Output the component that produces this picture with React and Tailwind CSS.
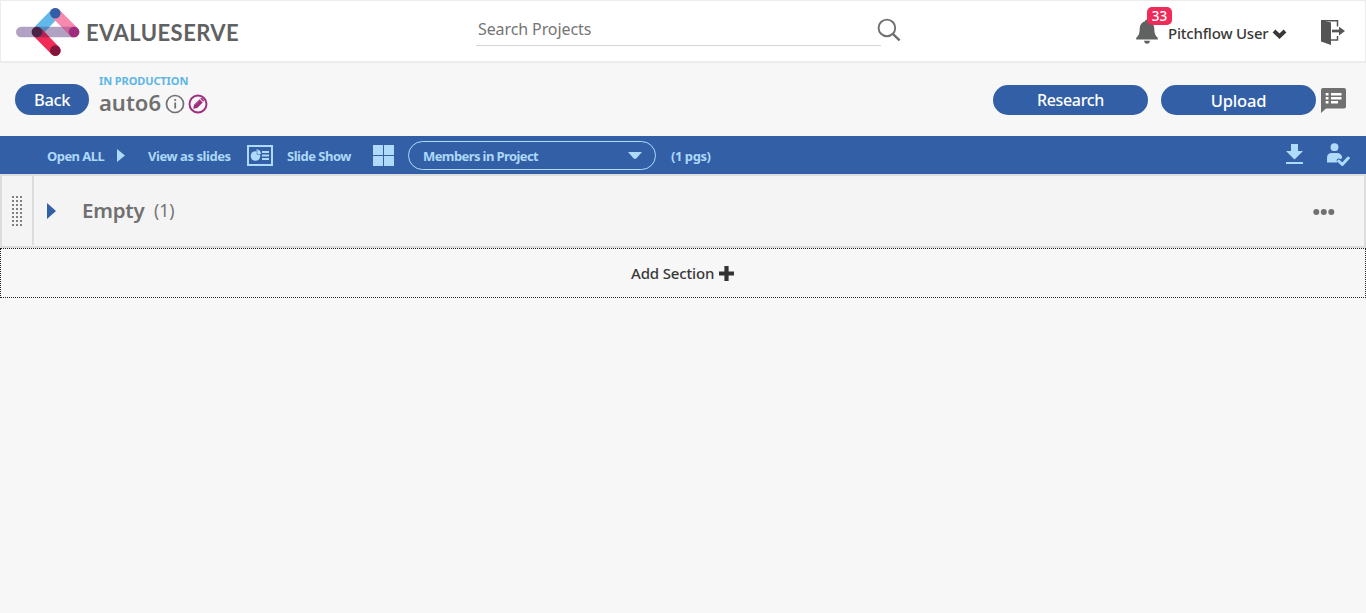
import React from "react";

const Logo = () => (
  <svg className="h-[50px] w-[66px] shrink-0" viewBox="15 7 66 50" fill="none" strokeWidth="10.6" strokeLinecap="round">
    <path d="M21.3 32H74" stroke="#afa2c2" />
    <path d="M55.3 13.3L37 32" stroke="#62b8e8" />
    <path d="M55.3 13.3L74 32" stroke="#f789ad" />
    <path d="M37 32L55.3 50.6" stroke="#f22a57" />
    <path d="M39 26.7H49.7L39.5 37.3H37Z" fill="#5588be" />
    <path d="M61.200 26.700H76L74 37.300H71.500Z" fill="#c8669e" />
    <path d="M35 32L40.5 37.3H49.500L42 29Z" fill="#b52352" />
    <circle cx="55.3" cy="13.3" r="5.3" fill="#315fa7" />
    <circle cx="74" cy="32" r="5.3" fill="#a02c7d" />
    <circle cx="37" cy="32" r="5.3" fill="#472346" />
    <circle cx="55.3" cy="50.6" r="5.3" fill="#85163b" />
  </svg>
);

const Header = () => (
  <header className="flex h-[63px] items-start border border-b-2 border-[#ececec] bg-white">
    <div className="ml-[14px] mt-[6px] flex w-[461px] items-center">
      <Logo />
      <span className="ml-[5px] mt-px whitespace-nowrap font-['Lato'] text-[22px] font-bold leading-[28px] tracking-[0.450px] text-[#606161]">EVALUESERVE</span>
    </div>
    <div className="flex h-[45px] w-[405px] items-center border-b border-[#d5d5d5] pl-[2px] pt-[11px]">
      <span className="whitespace-nowrap text-[16px] tracking-[-0.1px] text-[#757575]">Search Projects</span>
    </div>
    <svg className="-ml-[4px] mt-[17px] h-6 w-6 shrink-0" viewBox="0 0 24 24" fill="none" stroke="#707070">
      <circle cx="9.9" cy="9.9" r="8.3" strokeWidth="1.9" />
      <path d="M15.8 15.8L22.6 22.3" strokeWidth="2.5" />
    </svg>
    <div className="relative ml-[234px] mt-[17px] h-[28px] w-[24px] shrink-0">
      <svg className="h-[28px] w-[24px]" viewBox="0 0 24 28" fill="#606161">
        <path d="M12 1.5c1.1 0 1.9.7 1.9 1.8 3.5 1 5.4 3.6 5.4 7.3 0 5 1 7.2 3.5 9.2v1.8H1.2v-1.8c2.5-2 3.5-4.200 3.500-9.200 0-3.700 1.900-6.300 5.400-7.300 0-1.100.8-1.800 1.900-1.800z" />
        <path d="M9 22.800h6c-.3 1.900-1.400 2.900-3 2.900s-2.700-1-3-2.900z" />
      </svg>
      <span className="absolute -top-[11px] left-[12px] flex h-[18px] w-[25px] items-center justify-center rounded-[5px] bg-[#ef2b59] pt-px text-[13.500px] font-medium text-white">33</span>
    </div>
    <div className="ml-[9px] mt-[21px] flex h-[22px] w-[120px] items-center">
      <span className="w-[101px] whitespace-nowrap text-[15px] font-medium tracking-[-0.200px] text-[#383838]">Pitchflow User</span>
      <svg className="ml-[3px] mt-px h-[10px] w-[15px] shrink-0" viewBox="0 0 15 10">
        <path d="M2 2L7.500 7.200L13 2" fill="none" stroke="#383838" strokeWidth="4" />
      </svg>
    </div>
    <svg className="ml-[32px] mt-[17px] h-[28px] w-[26px] shrink-0" viewBox="0 0 26 28" fill="none" stroke="#555">
      <path d="M1 2L11 4.500V27L1 23.500Z" fill="#555" stroke="none" />
      <path d="M1 2.700H17.500V8.500M17.500 18V22H11" strokeWidth="1.500" />
      <path d="M12 13H21" strokeWidth="2.700" />
      <path d="M19 8.700L25 13L19 17.500Z" fill="#555" stroke="none" />
    </svg>
  </header>
);

const Title = () => (
  <div className="flex h-[73px] items-start pl-[15px]">
    <button className="mt-[21px] h-[31px] w-[74px] rounded-full bg-[#325fa6] pt-px text-[16.500px] font-medium leading-[30px] tracking-[-0.400px] text-white">Back</button>
    <div className="ml-[10px] mt-[11px] w-[894px]">
      <div className="h-[14px] whitespace-nowrap text-[11px] font-bold leading-[14px] tracking-[-0.100px] text-[#5db6e6]">IN PRODUCTION</div>
      <div className="flex h-[31px] items-center">
        <span className="-mt-[2px] w-[62px] whitespace-nowrap text-[22px] font-semibold tracking-[0px] text-[#707070]">auto6</span>
        <svg className="ml-[4px] h-5 w-5" viewBox="0 0 20 20" fill="none" stroke="#707070">
          <circle cx="10" cy="10" r="8.500" strokeWidth="1.700" />
          <path d="M10.200 8.500V14.500" strokeWidth="1.800" />
          <circle cx="10.200" cy="6" r="1.100" fill="#707070" stroke="none" />
        </svg>
        <svg className="ml-[3px] h-5 w-5" viewBox="0 0 20 20">
          <circle cx="10" cy="10" r="8.500" fill="none" stroke="#a02c7d" strokeWidth="1.900" />
          <path d="M5.200 14.800L6 10.800L11.500 5.300L14.700 8.500L9.200 14L5.200 14.800ZM12.200 4.700L13 4.100Q13.700 3.700 14.300 4.300L15.700 5.700Q16.300 6.300 15.800 7L15.300 7.800Z" fill="#a02c7d" />
          <path d="M7.300 10.800L11.500 6.600" stroke="#cf86b9" strokeWidth=".5" />
        </svg>
      </div>
    </div>
    <button className="mt-[22px] h-[30px] w-[155px] rounded-full bg-[#325fa6] pt-px text-[16px] font-medium leading-[29px] tracking-[-0.350px] text-white">Research</button>
    <button className="ml-[13px] mt-[22px] h-[30px] w-[155px] rounded-full bg-[#325fa6] pt-px text-[16.500px] font-medium leading-[29px] tracking-[-0.200px] text-white">Upload</button>
    <svg className="ml-[5px] mt-[25px] h-[26px] w-[26px] shrink-0" viewBox="0 0 26 26">
      <path d="M2 0H23Q25 0 25 2V18.500Q25 20.500 23 20.500H5L0 25V2Q0 0 2 0Z" fill="#707070" />
      <path d="M4.700 6.200H7.500M4.700 10.200H7.500M4.700 14.200H7.500M10 6.200H20.500M10 10.200H20.500M10 14.200H17" stroke="white" strokeWidth="2.500" />
    </svg>
  </div>
);

const Toolbar = () => (
  <div className="flex h-[38px] items-center bg-[#325fa6] pl-[47px] text-[13px] font-bold text-[#add8f7]">
    <span className="w-[70px] whitespace-nowrap pt-[3px] tracking-[-0.550px]">Open ALL</span>
    <svg className="h-[13px] w-[8px]" viewBox="0 0 8 13"><path d="M0 0L8 6.500L0 13Z" fill="#b0dafa" /></svg>
    <span className="ml-[23px] w-[99px] whitespace-nowrap pt-[3px] tracking-[-0.450px]">View as slides</span>
    <svg className="h-[21px] w-[26px]" viewBox="0 0 26 21" fill="none">
      <rect x="1" y="1" width="24" height="19" stroke="#b0dafa" strokeWidth="2" />
      <circle cx="8.500" cy="11" r="4.800" fill="#b0dafa" />
      <path d="M9.500 4.200A5 5 0 0 1 14 9H9.500Z" fill="#b0dafa" />
      <path d="M10 5V9.500H14" stroke="#325fa6" strokeWidth=".5" />
      <path d="M15 7H22M15 10.500H22M15 14H22" stroke="#b0dafa" strokeWidth="1.800" />
    </svg>
    <span className="ml-[14px] w-[86px] whitespace-nowrap pt-[3px] tracking-[-0.500px]">Slide Show</span>
    <svg className="h-[21px] w-[21px]" viewBox="0 0 21 21" fill="#b0dafa">
      <path d="M0 0H10V10H0ZM11 0H21V10H11ZM0 11H10V21H0ZM11 11H21V21H11Z" />
    </svg>
    <div className="ml-[14px] flex h-[29px] w-[248px] items-center justify-between rounded-full border border-[#b0dafa] pl-[14px] pr-[13px]">
      <span className="whitespace-nowrap pt-[3px] tracking-[-0.600px]">Members in Project</span>
      <svg className="h-[7px] w-[14px]" viewBox="0 0 14 7"><path d="M0 0H14L8.500 6.300Q7 7.500 5.500 6.300Z" fill="#b0dafa" /></svg>
    </div>
    <span className="ml-[15px] whitespace-nowrap pt-[3px] tracking-[-0.450px]">(1 pgs)</span>
    <svg className="-mt-[2px] ml-auto h-[20px] w-[18px]" viewBox="0 0 18 20" fill="#b0dafa">
      <path d="M5 0H12V7H17L8.500 15.500L0 7H5ZM0 18H17V20H0Z" />
    </svg>
    <svg className="ml-[22px] mr-[16px] h-6 w-6" viewBox="0 0 24 24" fill="#b0dafa">
      <circle cx="8.500" cy="4.200" r="3.900" />
      <path d="M1 19.500V15Q1 10 6 10H11Q15.500 10 16.200 14.500L15 16.200L13 15.600Q11 15.400 10.500 17.400L11.500 19.500Z" />
      <path d="M12.700 18L16.300 21.500L22.300 15" fill="none" stroke="#b0dafa" strokeWidth="3" strokeLinecap="round" strokeLinejoin="round" />
    </svg>
  </div>
);

const dots = [0, 4, 8, 12, 16, 20, 24, 28];

const Section = () => (
  <section className="flex h-[74px] items-stretch border-2 border-[#ddd] bg-[#f4f4f4]">
    <div className="mb-px flex w-[32px] items-center border-r-2 border-[#ddd] pl-[10px]">
      <svg className="h-[30px] w-[10px]" viewBox="0 0 10 30" fill="#808080">
        {dots.map((y) => <path key={y} d={`M0 ${y}h2v2h-2zM4 ${y}h2v2h-2zM8 ${y}h2v2h-2z`} />)}
      </svg>
    </div>
    <div className="flex flex-1 items-center pb-[2px] pl-[13px]">
      <svg className="mt-[2px] h-[16px] w-[9px]" viewBox="0 0 9 16"><path d="M0 0L9 8L0 16Z" fill="#325fa6" /></svg>
      <span className="ml-[26px] w-[72px] whitespace-nowrap text-[20.500px] font-semibold tracking-[-0.200px] text-[#707070]">Empty</span>
      <span className="whitespace-nowrap text-[17.500px] text-[#757575]">(1)</span>
      <svg className="ml-auto mr-[29px] mt-[3px] h-[6px] w-[22px]" viewBox="0 0 22 6" fill="#707070">
        <circle cx="3.300" cy="3" r="3" /><circle cx="10.800" cy="3" r="3" /><circle cx="18.300" cy="3" r="3" />
      </svg>
    </div>
  </section>
);

export default function App() {
  return (
    <div className="h-[613px] overflow-hidden bg-[#f7f7f7] font-['Noto_Sans',sans-serif]">
      <Header />
      <Title />
      <Toolbar />
      <Section />
      <button className="flex h-[50px] w-full items-center border border-dotted border-[#222] pl-[630px]">
        <span className="mt-px w-[84px] whitespace-nowrap text-left text-[15px] font-medium tracking-[-0.150px] text-[#383838]">Add Section</span>
        <svg className="ml-[4px] h-[15px] w-[15px]" viewBox="0 0 15 15"><path d="M7.500 0V15M0 7.500H15" stroke="#333" strokeWidth="4.200" /></svg>
      </button>
    </div>
  );
}
